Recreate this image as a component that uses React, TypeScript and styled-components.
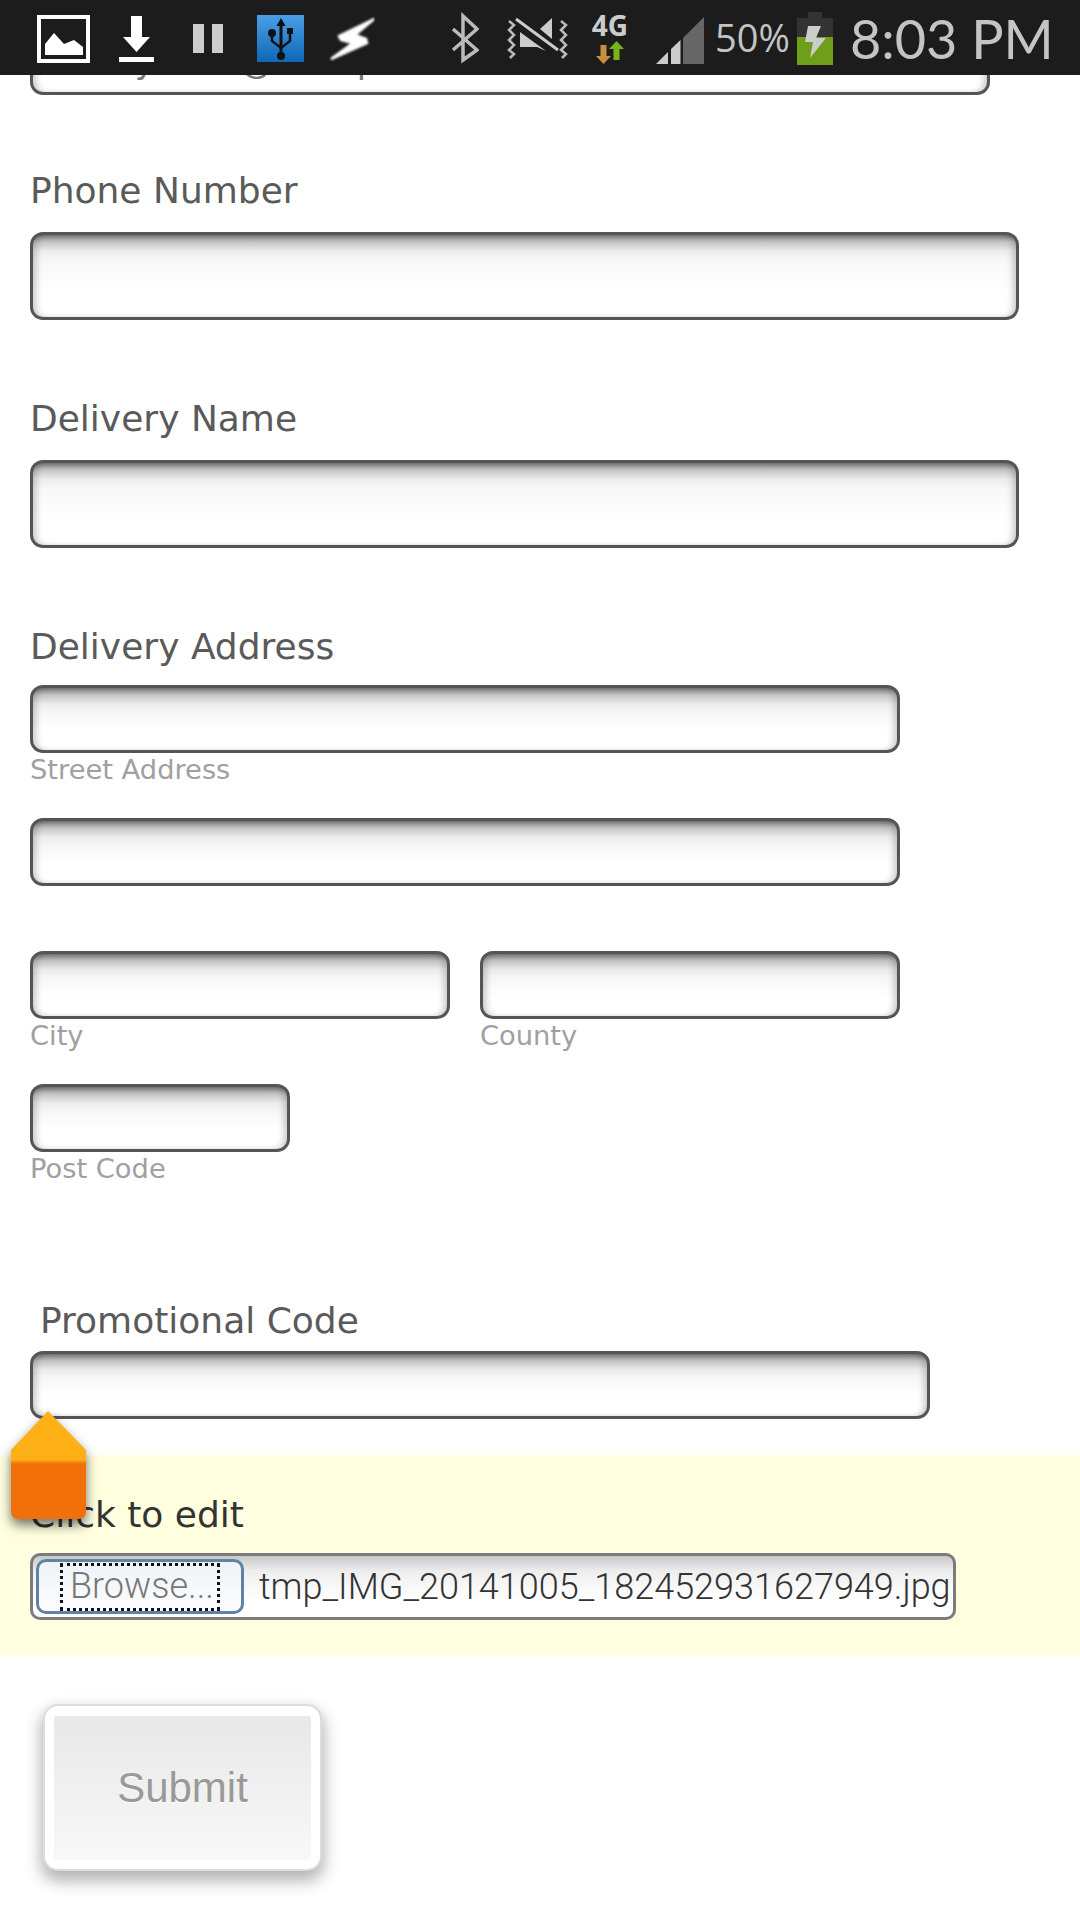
import React from 'react'
import styled, { createGlobalStyle } from 'styled-components'

const Global = createGlobalStyle`
    html, body {
        margin: 0;
        padding: 0;
        background: #fff;
    }
    * {
        box-sizing: border-box;
    }
`

const StatusIcon = ({ w, ml, children }: { w: number; ml: number; children: React.ReactNode }) => (
    <IconSvg $ml={ml} width={w} height={75} viewBox={`0 0 ${w} 75`}>
        {children}
    </IconSvg>
)

const StatusIcons = () => (
    <StatusBar>
        <StatusIcon w={53} ml={0}>
            <rect x={2} y={17} width={49} height={44} fill="none" stroke="#fff" strokeWidth={4} />
            <path d="M8 55V44L17 33L27 44L37 40L46 47V55Z" fill="#fff" />
        </StatusIcon>
        <StatusIcon w={35} ml={29}>
            <path d="M12 16H23V37H31L17.5 52L4 37H12Z" fill="#fff" />
            <rect x={0} y={57} width={35} height={5} fill="#fff" />
        </StatusIcon>
        <StatusIcon w={30} ml={39}>
            <rect x={0} y={24} width={11} height={29} fill="#ccc" />
            <rect x={19} y={24} width={11} height={29} fill="#ccc" />
        </StatusIcon>
        <StatusIcon w={47} ml={34}>
            <defs>
                <linearGradient id="usbBg" x1="0" y1="0" x2="0" y2="1">
                    <stop offset="0" stopColor="#4a9fe6" />
                    <stop offset="1" stopColor="#0f67b6" />
                </linearGradient>
            </defs>
            <rect x={0} y={15} width={47} height={47} fill="url(#usbBg)" />
            <path d="M24 18L28.5 26H25.5V54H22.5V26H19.5Z" fill="#111" />
            <circle cx={24} cy={56} r={4} fill="#111" />
            <circle cx={15} cy={33} r={4} fill="#111" />
            <rect x={30} y={28} width={6} height={6} fill="#111" />
            <path d="M15 35V41L24 48L33 41V34" fill="none" stroke="#111" strokeWidth={2.5} />
        </StatusIcon>
        <StatusIcon w={46} ml={25}>
            <path
                d="M45 19L10 36L12 40L24 43L2 59L38 43L37 39L26 35Z"
                fill="#fff"
                stroke="#fff"
                strokeWidth={2.5}
                style={{ filter: 'blur(1px)' }}
            />
        </StatusIcon>
        <StatusIcon w={28} ml={76}>
            <path d="M2 29L26 50L12 60V16L26 29L2 50" fill="none" stroke="#bbb" strokeWidth={3.5} />
        </StatusIcon>
        <StatusIcon w={61} ml={28}>
            <path d="M2 21L7 25L2 30L7 35L2 40L7 45L2 50L7 54L3 58" fill="none" stroke="#bbb" strokeWidth={2.5} />
            <path d="M54 21L59 25L54 30L59 35L54 40L59 45L54 50L59 54L55 58" fill="none" stroke="#bbb" strokeWidth={2.5} />
            <path d="M13 32L39 51L30 47H13Z" fill="#ccc" />
            <path d="M45 18V39L33 29Z" fill="#ccc" />
            <path d="M9 19L51 50" stroke="#ccc" strokeWidth={3} />
        </StatusIcon>
        <NetworkBadge>
            <NetworkLabel>4G</NetworkLabel>
            <NetworkArrows width={28} height={23} viewBox="0 0 28 23">
                <path d="M4.5 4H10.5V15H15L7.5 23L0 15H4.5Z" fill="#c98f3d" />
                <path d="M20.5 0L28 8H23.5V19H17.5V8H13Z" fill="#78b31c" />
            </NetworkArrows>
        </NetworkBadge>
        <StatusIcon w={48} ml={28}>
            <path d="M0 64L12 52V64Z" fill="#ccc" />
            <path d="M15 49L24.5 40V64H15Z" fill="#ccc" />
            <path d="M27 38L48 17V64H27Z" fill="#666" />
        </StatusIcon>
        <Percent>50%</Percent>
        <StatusIcon w={36} ml={7}>
            <rect x={11} y={12} width={14} height={6} fill="#333" />
            <rect x={0} y={18} width={36} height={19} fill="#333" />
            <rect x={0} y={37} width={36} height={28} fill="#6f9e18" />
            <path d="M11 26H24L19 38H29L13 58L16 42H8Z" fill="#ccc" />
        </StatusIcon>
        <Clock>8:03 PM</Clock>
    </StatusBar>
)

const App = () => {
    return (
        <Page>
            <Global />
            <StatusIcons />
            <ScrolledOff>
                <Field $width={960} $height={68} readOnly value="Emmy.Ross@mail.pt" />
            </ScrolledOff>
            <Form>
                <Label $top={75}>Phone Number</Label>
                <Field $width={989} $height={88} $top={20} readOnly />

                <Label $top={78}>Delivery Name</Label>
                <Field $width={989} $height={88} $top={20} readOnly />

                <Label $top={78}>Delivery Address</Label>
                <Field $width={870} $height={68} $top={17} readOnly />
                <Hint>Street Address</Hint>
                <Field $width={870} $height={68} $top={33} readOnly />

                <TwoColumns>
                    <div>
                        <Field $width={420} $height={68} readOnly />
                        <Hint>City</Hint>
                    </div>
                    <div>
                        <Field $width={420} $height={68} readOnly />
                        <Hint>County</Hint>
                    </div>
                </TwoColumns>

                <Field $width={260} $height={68} $top={33} readOnly />
                <Hint>Post Code</Hint>

                <PromoLabel>Promotional Code</PromoLabel>
                <Field $width={900} $height={68} $top={9} readOnly />
            </Form>

            <UploadBand>
                <UploadMarker width={95} height={129} viewBox="0 0 95 129">
                    <defs>
                        <linearGradient id="markerFill" x1="0" y1="0" x2="0" y2="1">
                            <stop offset="0.45" stopColor="#fdb116" />
                            <stop offset="0.49" stopColor="#f1700a" />
                        </linearGradient>
                    </defs>
                    <path d="M48 1L86 40V101Q86 109 78 109H19Q11 109 11 101V40Z" fill="url(#markerFill)" />
                </UploadMarker>
                <UploadLabel>Click to edit</UploadLabel>
                <FileInput>
                    <BrowseButton>
                        <BrowseFocus>Browse...</BrowseFocus>
                    </BrowseButton>
                    <FileName>tmp_IMG_20141005_182452931627949.jpg</FileName>
                </FileInput>
            </UploadBand>

            <SubmitFrame>
                <SubmitButton>Submit</SubmitButton>
            </SubmitFrame>
        </Page>
    )
}

export default App

const Page = styled.div`
    width: 1080px;
    height: 1920px;
    overflow: hidden;
    background: #fff;
    font-family: "DejaVu Sans", sans-serif;
`

const StatusBar = styled.div`
    display: flex;
    align-items: flex-start;
    height: 75px;
    padding-left: 37px;
    background: #1c1c1c;
`

const IconSvg = styled.svg<{ $ml: number }>`
    display: block;
    flex: none;
    margin-left: ${props => props.$ml}px;
`

const NetworkBadge = styled.div`
    display: flex;
    flex-direction: column;
    align-items: center;
    width: 36px;
    margin-left: 24px;
    padding-top: 12px;
`

const NetworkLabel = styled.span`
    height: 26px;
    font-family: "Open Sans", sans-serif;
    font-size: 28px;
    font-weight: 700;
    line-height: 26px;
    color: #ccc;
`

const NetworkArrows = styled.svg`
    display: block;
    flex: none;
    margin-top: 3px;
`

const Percent = styled.span`
    margin-left: 11px;
    font-family: "Open Sans", sans-serif;
    font-size: 38px;
    line-height: 75px;
    color: #c4c4c4;
`

const Clock = styled.span`
    margin-left: 17px;
    font-family: "Lato", sans-serif;
    font-size: 54px;
    font-weight: 400;
    line-height: 78px;
    white-space: nowrap;
    color: #c4c4c4;
`

const ScrolledOff = styled.div`
    display: flex;
    align-items: flex-end;
    height: 20px;
    padding-left: 30px;
    overflow: hidden;
`

const Form = styled.div`
    display: flex;
    flex-direction: column;
    align-items: flex-start;
    padding-left: 30px;
`

const Label = styled.label<{ $top: number }>`
    display: block;
    margin-top: ${props => props.$top}px;
    font-size: 36px;
    line-height: 42px;
    color: #5a5a5a;
`

const PromoLabel = styled(Label).attrs({ $top: 116 })`
    padding-left: 10px;
`

const Field = styled.input<{ $width: number; $height: number; $top?: number }>`
    display: block;
    flex: none;
    width: ${props => props.$width}px;
    height: ${props => props.$height}px;
    margin: ${props => props.$top || 0}px 0 0;
    padding: 0 14px;
    border: 3px solid #555;
    border-radius: 13px;
    outline: none;
    background: linear-gradient(#7a7a7a 0, #c4c4c4 7px, #ececec 16px, #f8f8f8 26px, #fff 70%);
    box-shadow: inset 6px 0 7px -3px rgba(0, 0, 0, 0.22), inset -6px 0 7px -3px rgba(0, 0, 0, 0.22);
    font-family: "DejaVu Sans", sans-serif;
    font-size: 34px;
    color: #777;
`

const Hint = styled.div`
    height: 30px;
    margin-top: 2px;
    font-size: 27.3px;
    line-height: 30px;
    color: #a0a0a0;
`

const TwoColumns = styled.div`
    display: flex;
    gap: 30px;
    margin-top: 65px;
`

const UploadBand = styled.div`
    position: relative;
    height: 201px;
    margin-top: 36px;
    padding: 39px 0 0 30px;
    background: #ffffdf;
`

const UploadMarker = styled.svg`
    position: absolute;
    top: -45px;
    left: 0;
    filter: drop-shadow(0 6px 6px rgba(0, 0, 0, 0.55));
`

const UploadLabel = styled.div`
    font-size: 36px;
    line-height: 42px;
    color: #333;
`

const FileInput = styled.div`
    display: flex;
    align-items: center;
    width: 926px;
    height: 67px;
    margin-top: 17px;
    padding-left: 3px;
    border: 3px solid #7c7c7c;
    border-radius: 10px;
    background: linear-gradient(#c8c8c8 0, #eeeeee 25%, #fafafa 55%, #fff 75%);
    overflow: hidden;
`

const BrowseButton = styled.div`
    flex: none;
    display: flex;
    align-items: center;
    justify-content: center;
    width: 208px;
    height: 55px;
    border: 3px solid #5f83a2;
    border-radius: 10px;
    background: linear-gradient(#eef2f7, #fcfdff);
`

const BrowseFocus = styled.div`
    width: 160px;
    height: 48px;
    padding-left: 7px;
    border: 3px dotted #111;
    font-family: "Roboto", sans-serif;
    font-size: 36px;
    font-weight: 300;
    line-height: 41px;
    white-space: nowrap;
    overflow: hidden;
    color: #777;
`

const FileName = styled.span`
    margin-left: 15px;
    font-family: "Roboto", sans-serif;
    font-size: 36px;
    font-weight: 300;
    white-space: nowrap;
    color: #333;
`

const SubmitFrame = styled.div`
    width: 279px;
    height: 167px;
    margin: 48px 0 0 43px;
    padding: 10px 9px 9px 9px;
    border: 2px solid #dcdcdc;
    border-radius: 15px;
    background: #fff;
    box-shadow: 0 8px 16px 2px rgba(0, 0, 0, 0.3);
`

const SubmitButton = styled.div`
    display: flex;
    align-items: center;
    justify-content: center;
    height: 100%;
    border-radius: 3px;
    background: linear-gradient(#e8e8e8, #f8f8f8);
    font-family: "Liberation Sans", Arial, sans-serif;
    font-size: 42px;
    color: #999;
    text-shadow: 0 1px 0 #fff;
`
